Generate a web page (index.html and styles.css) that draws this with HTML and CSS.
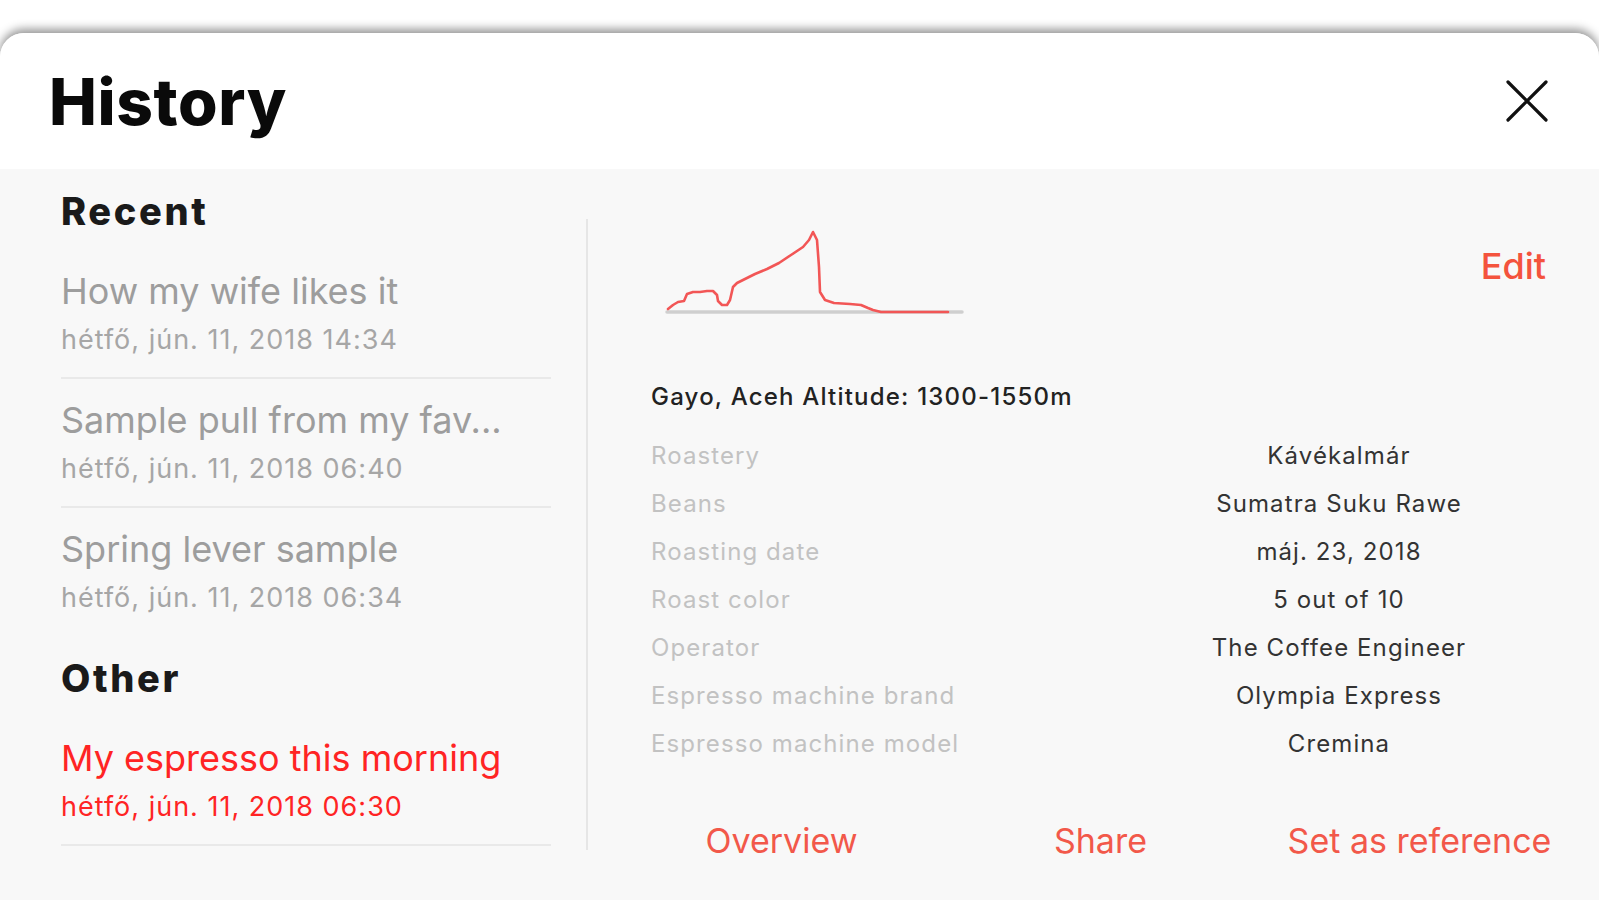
FILE: index.html
```html
<!DOCTYPE html>
<html lang="en">
<head>
<meta charset="utf-8">
<title>History</title>
<link rel="stylesheet" href="styles.css">
</head>
<body>
<div class="sheet">
  <header class="head">
    <h1 class="head-title">History</h1>
    <button class="close" aria-label="Close">
      <svg width="44" height="44" viewBox="0 0 44 44"><path d="M3 3 L41 41 M41 3 L3 41" stroke="#111" stroke-width="3.2" stroke-linecap="round" fill="none"/></svg>
    </button>
  </header>
  <div class="main">
    <aside class="list">
      <h2 class="section">Recent</h2>
      <div class="item sep">
        <div class="item-title">How my wife likes it</div>
        <div class="item-date">hétfő, jún. 11, 2018 14:34</div>
      </div>
      <div class="item sep">
        <div class="item-title">Sample pull from my fav...</div>
        <div class="item-date">hétfő, jún. 11, 2018 06:40</div>
      </div>
      <div class="item">
        <div class="item-title">Spring lever sample</div>
        <div class="item-date">hétfő, jún. 11, 2018 06:34</div>
      </div>
      <h2 class="section section-other">Other</h2>
      <div class="item sep selected">
        <div class="item-title">My espresso this morning</div>
        <div class="item-date">hétfő, jún. 11, 2018 06:30</div>
      </div>
    </aside>
    <div class="divider"></div>
    <section class="detail">
      <div class="detail-top">
        <svg class="chart" width="320" height="100" viewBox="0 0 320 100">
          <line x1="16" y1="90" x2="311" y2="90" stroke="#cfcfcf" stroke-width="3.5" stroke-linecap="round"/>
          <path d="M17 87 L22 83 L27 80 L33 79 L36 72 L42 70 L49 70 L56 69 L62 69 L66 73 L67 79 L71 83 L76 83 L79 78 L82 65 L86 61 L92 58 L104 52 L116 47 L128 41 L140 33 L152 25 L158 18 L162 10 L166 18 L168 45 L169 70 L174 78 L183 81 L199 82 L210 83 L217 86 L222 88 L230 90 L297 90" stroke="#f25656" stroke-width="2.6" fill="none" stroke-linejoin="round" stroke-linecap="round"/>
        </svg>
        <a class="edit">Edit</a>
      </div>
      <p class="origin">Gayo, Aceh Altitude: 1300-1550m</p>
      <dl class="props">
        <dt>Roastery</dt><dd>Kávékalmár</dd>
        <dt>Beans</dt><dd>Sumatra Suku Rawe</dd>
        <dt>Roasting date</dt><dd>máj. 23, 2018</dd>
        <dt>Roast color</dt><dd>5 out of 10</dd>
        <dt>Operator</dt><dd>The Coffee Engineer</dd>
        <dt>Espresso machine brand</dt><dd>Olympia Express</dd>
        <dt>Espresso machine model</dt><dd>Cremina</dd>
      </dl>
      <div class="actions">
        <a class="action">Overview</a>
        <a class="action">Share</a>
        <a class="action">Set as reference</a>
      </div>
    </section>
  </div>
</div>
</body>
</html>
```

FILE: styles.css
```css
html, body {
  margin: 0;
  padding: 0;
  height: 100%;
  overflow: hidden;
  background: #ffffff;
  font-family: Inter, "Noto Sans", "Liberation Sans", sans-serif;
}

.sheet {
  margin-top: 33px;
  height: 867px;
  background: #f8f8f8;
  border-radius: 24px 24px 0 0;
  box-shadow: 0 -4px 10px rgba(0, 0, 0, 0.42);
  overflow: hidden;
}

.head {
  display: flex;
  align-items: center;
  justify-content: space-between;
  padding: 38px 50px 36px 49px;
  background: #ffffff;
}

.head-title {
  margin: 0;
  font-size: 64px;
  line-height: 62px;
  font-weight: 800;
  color: #0a0a0a;
  letter-spacing: 0.6px;
}

.close {
  display: block;
  width: 44px;
  height: 44px;
  margin-top: -2px;
  padding: 0;
  border: 0;
  background: none;
}

.close svg {
  display: block;
}

.main {
  display: flex;
  align-items: flex-start;
}

.list {
  flex: none;
  width: 490px;
  padding: 23px 0 0 61px;
}

.section {
  margin: 0 0 20px;
  font-size: 38px;
  line-height: 38px;
  font-weight: 800;
  letter-spacing: 2.6px;
  color: #1a1a1a;
}

.section-other {
  margin-top: 24px;
}

.item {
  padding: 23px 0 24px;
}

.item.sep {
  border-bottom: 2px solid #e9e9e9;
}

.item-title {
  font-size: 36px;
  line-height: 36px;
  color: #9d9d9d;
  white-space: nowrap;
}

.item-date {
  margin-top: 17px;
  font-size: 27px;
  line-height: 27px;
  letter-spacing: 1px;
  color: #a6a6a6;
  white-space: nowrap;
}

.selected .item-title,
.selected .item-date {
  color: #ff2424;
}

.divider {
  flex: none;
  width: 2px;
  height: 631px;
  margin: 50px 0 0 35px;
  background: #e6e6e6;
}

.detail {
  flex: 1;
  padding: 0 30px 0 63px;
}

.detail-top {
  display: flex;
  justify-content: space-between;
  align-items: flex-start;
  margin-top: 53px;
}

.chart {
  display: block;
}

.edit {
  margin: 26px 33px 0 0;
  font-size: 36px;
  line-height: 36px;
  font-weight: 500;
  color: #f4533d;
}

.origin {
  margin: 63px 0 0;
  font-size: 24px;
  line-height: 24px;
  font-weight: 500;
  letter-spacing: 1.2px;
  color: #222222;
}

.props {
  display: grid;
  grid-template-columns: 1fr 1fr;
  margin: 23px 0 0;
  font-size: 24px;
  line-height: 48px;
  letter-spacing: 1.1px;
}

.props dt {
  color: #c2c2c2;
}

.props dd {
  margin: 0;
  padding-right: 16px;
  color: #333333;
  text-align: center;
}

.actions {
  display: flex;
  margin: 56px 0 0 -29px;
}

.action {
  flex: none;
  width: 319px;
  text-align: center;
  font-size: 34px;
  line-height: 34px;
  color: #f2584a;
}
```
